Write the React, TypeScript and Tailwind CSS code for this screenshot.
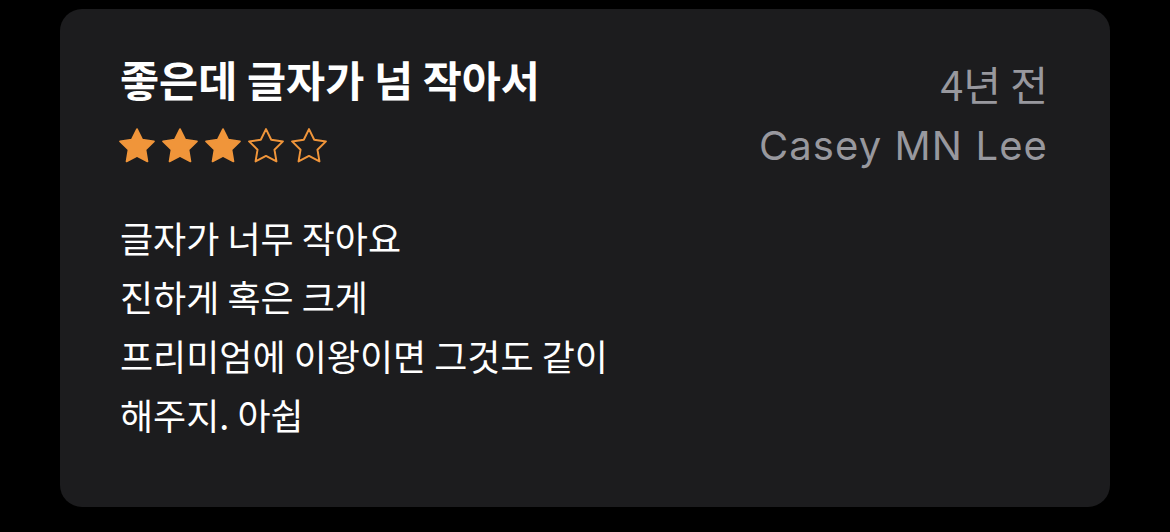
import React from "react";

const ko = "font-['Noto_Sans_CJK_KR','Noto_Sans',sans-serif]";

function Star({ filled }: { filled: boolean }) {
  return (
    <svg width="36" height="36" viewBox="2 2 20 20" className="shrink-0">
      <path
        d="M12 2.6l2.9 5.9 6.5.95-4.7 4.6 1.1 6.5L12 17.5l-5.8 3.05 1.1-6.5-4.7-4.6 6.5-.95L12 2.6z"
        fill={filled ? "#f0953a" : "none"}
        stroke="#f0953a"
        strokeWidth={filled ? 1 : 1.1}
        strokeLinejoin="round"
      />
    </svg>
  );
}

function Rating({ value }: { value: number }) {
  return (
    <div className="flex items-center gap-[7px]">
      {[0, 1, 2, 3, 4].map((i) => (
        <Star key={i} filled={i < value} />
      ))}
    </div>
  );
}

const lines = [
  "글자가 너무 작아요",
  "진하게 혹은 크게",
  "프리미엄에 이왕이면 그것도 같이",
  "해주지. 아쉽",
];

export default function App() {
  return (
    <div className="w-[1170px] h-[532px] bg-black pt-[9px] pl-[60px]">
      <div className="w-[1050px] h-[498px] rounded-[22px] bg-[#1c1c1e] pl-[60px] pr-[62px] pt-[45px]">
        {/* header */}
        <div className="flex justify-between">
          <div className="flex flex-col gap-[22px]">
            <div className={`${ko} h-[50px] leading-[50px] text-[42.5px] font-bold text-white`}>
              좋은데 글자가 넘 작아서
            </div>
            <div className="h-[40px] flex items-center -ml-[1px]">
              <Rating value={3} />
            </div>
          </div>
          <div className="flex flex-col items-end gap-[22px] text-[#98989e]">
            <div className={`${ko} h-[50px] leading-[50px] text-[41px] pt-[4px]`}>4년 전</div>
            <div className="h-[40px] leading-[40px] text-[40px] font-['Inter',sans-serif] tracking-[1.1px]">
              Casey MN Lee
            </div>
          </div>
        </div>

        {/* body */}
        <div className={`${ko} mt-[42px] text-[36px] leading-[59px] text-white`}>
          {lines.map((l) => (
            <div key={l}>{l}</div>
          ))}
        </div>
      </div>
    </div>
  );
}
